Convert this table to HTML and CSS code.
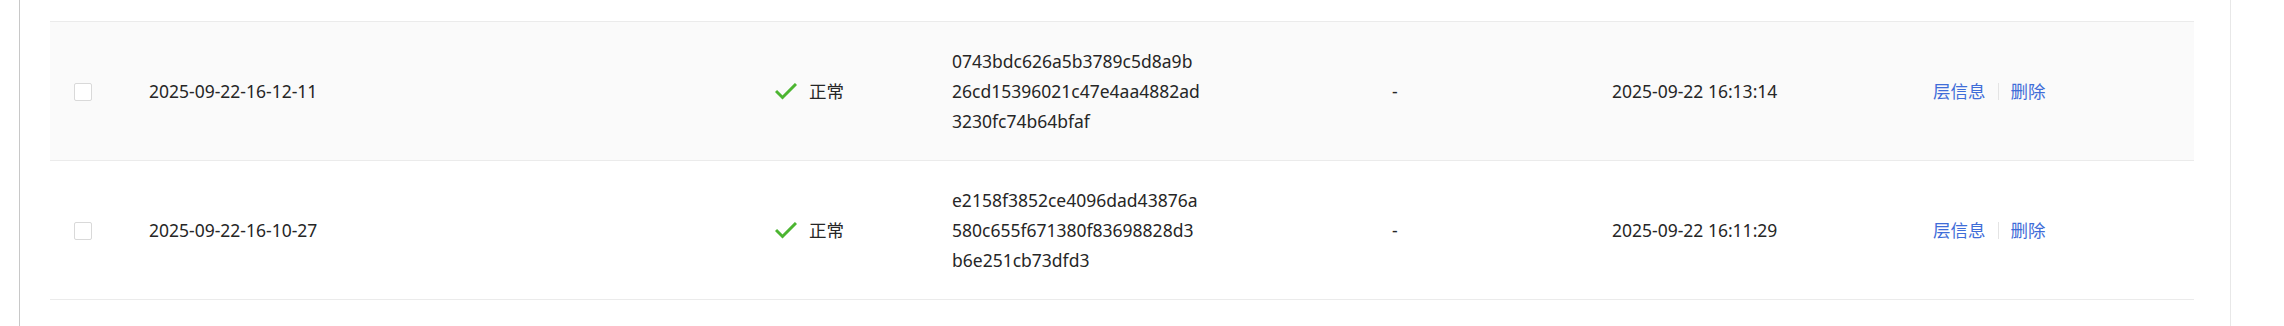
FILE: index.html
```html
<!DOCTYPE html>
<html lang="zh-CN">
<head>
  <meta charset="UTF-8" />
  <meta name="viewport" content="width=device-width, initial-scale=1.0" />
  <title>镜像版本</title>
  <link rel="stylesheet" href="styles.css">
</head>
<body>
  <div class="panel">
    <div class="table">
      <div class="row row-alt">
        <div class="cell"><span class="checkbox"></span></div>
        <div class="cell">2025-09-22-16-12-11</div>
        <div class="cell status">
          <svg class="check" viewBox="0 0 22 17"><polyline points="1,8 7.5,14.5 21,1"/></svg>
          <span>正常</span>
        </div>
        <div class="cell digest">
          <span>0743bdc626a5b3789c5d8a9b</span>
          <span>26cd15396021c47e4aa4882ad</span>
          <span>3230fc74b64bfaf</span>
        </div>
        <div class="cell">-</div>
        <div class="cell">2025-09-22 16:13:14</div>
        <div class="cell actions">
          <a href="#">层信息</a>
          <span class="divider"></span>
          <a href="#">删除</a>
        </div>
      </div>
      <div class="row">
        <div class="cell"><span class="checkbox"></span></div>
        <div class="cell">2025-09-22-16-10-27</div>
        <div class="cell status">
          <svg class="check" viewBox="0 0 22 17"><polyline points="1,8 7.5,14.5 21,1"/></svg>
          <span>正常</span>
        </div>
        <div class="cell digest">
          <span>e2158f3852ce4096dad43876a</span>
          <span>580c655f671380f83698828d3</span>
          <span>b6e251cb73dfd3</span>
        </div>
        <div class="cell">-</div>
        <div class="cell">2025-09-22 16:11:29</div>
        <div class="cell actions">
          <a href="#">层信息</a>
          <span class="divider"></span>
          <a href="#">删除</a>
        </div>
      </div>
    </div>
  </div>
</body>
</html>
```

FILE: styles.css
```css
body {
  margin: 0;
  font-family: "Noto Sans", "Noto Sans CJK SC", sans-serif;
  font-size: 17.5px;
  color: #262626;
  background-color: #ffffff;
}
.panel {
  box-sizing: border-box;
  width: 2212px;
  height: 326px;
  margin-left: 19px;
  padding: 21px 36px 0 30px;
  border-left: 1px solid #c8c8c8;
  border-right: 1px solid #e8e8e8;
}
.table {
  border-top: 1px solid #ebebeb;
}
.row {
  box-sizing: border-box;
  display: grid;
  grid-template-columns: 75px 625px 178px 440px 220px 321px 285px;
  align-items: center;
  height: 139px;
  border-bottom: 1px solid #ebebeb;
}
.row-alt {
  background-color: #fafafa;
}
.cell {
  padding-left: 24px;
  line-height: 30px;
  white-space: nowrap;
}
.checkbox {
  display: block;
  box-sizing: border-box;
  width: 18px;
  height: 18px;
  margin-top: 1px;
  border: 1px solid #d9d9d9;
  border-radius: 2px;
  background-color: #ffffff;
}
.status {
  display: flex;
  align-items: center;
  gap: 12px;
}
.check {
  width: 22px;
  height: 17px;
  margin-left: 1px;
  fill: none;
  stroke: #4cb531;
  stroke-width: 3;
}
.digest span {
  display: block;
}
.actions {
  display: flex;
  align-items: center;
}
.actions a {
  color: #3f6dd8;
  text-decoration: none;
}
.divider {
  width: 1px;
  height: 17px;
  margin: 0 12px;
  background-color: #e4e4e4;
}
```
